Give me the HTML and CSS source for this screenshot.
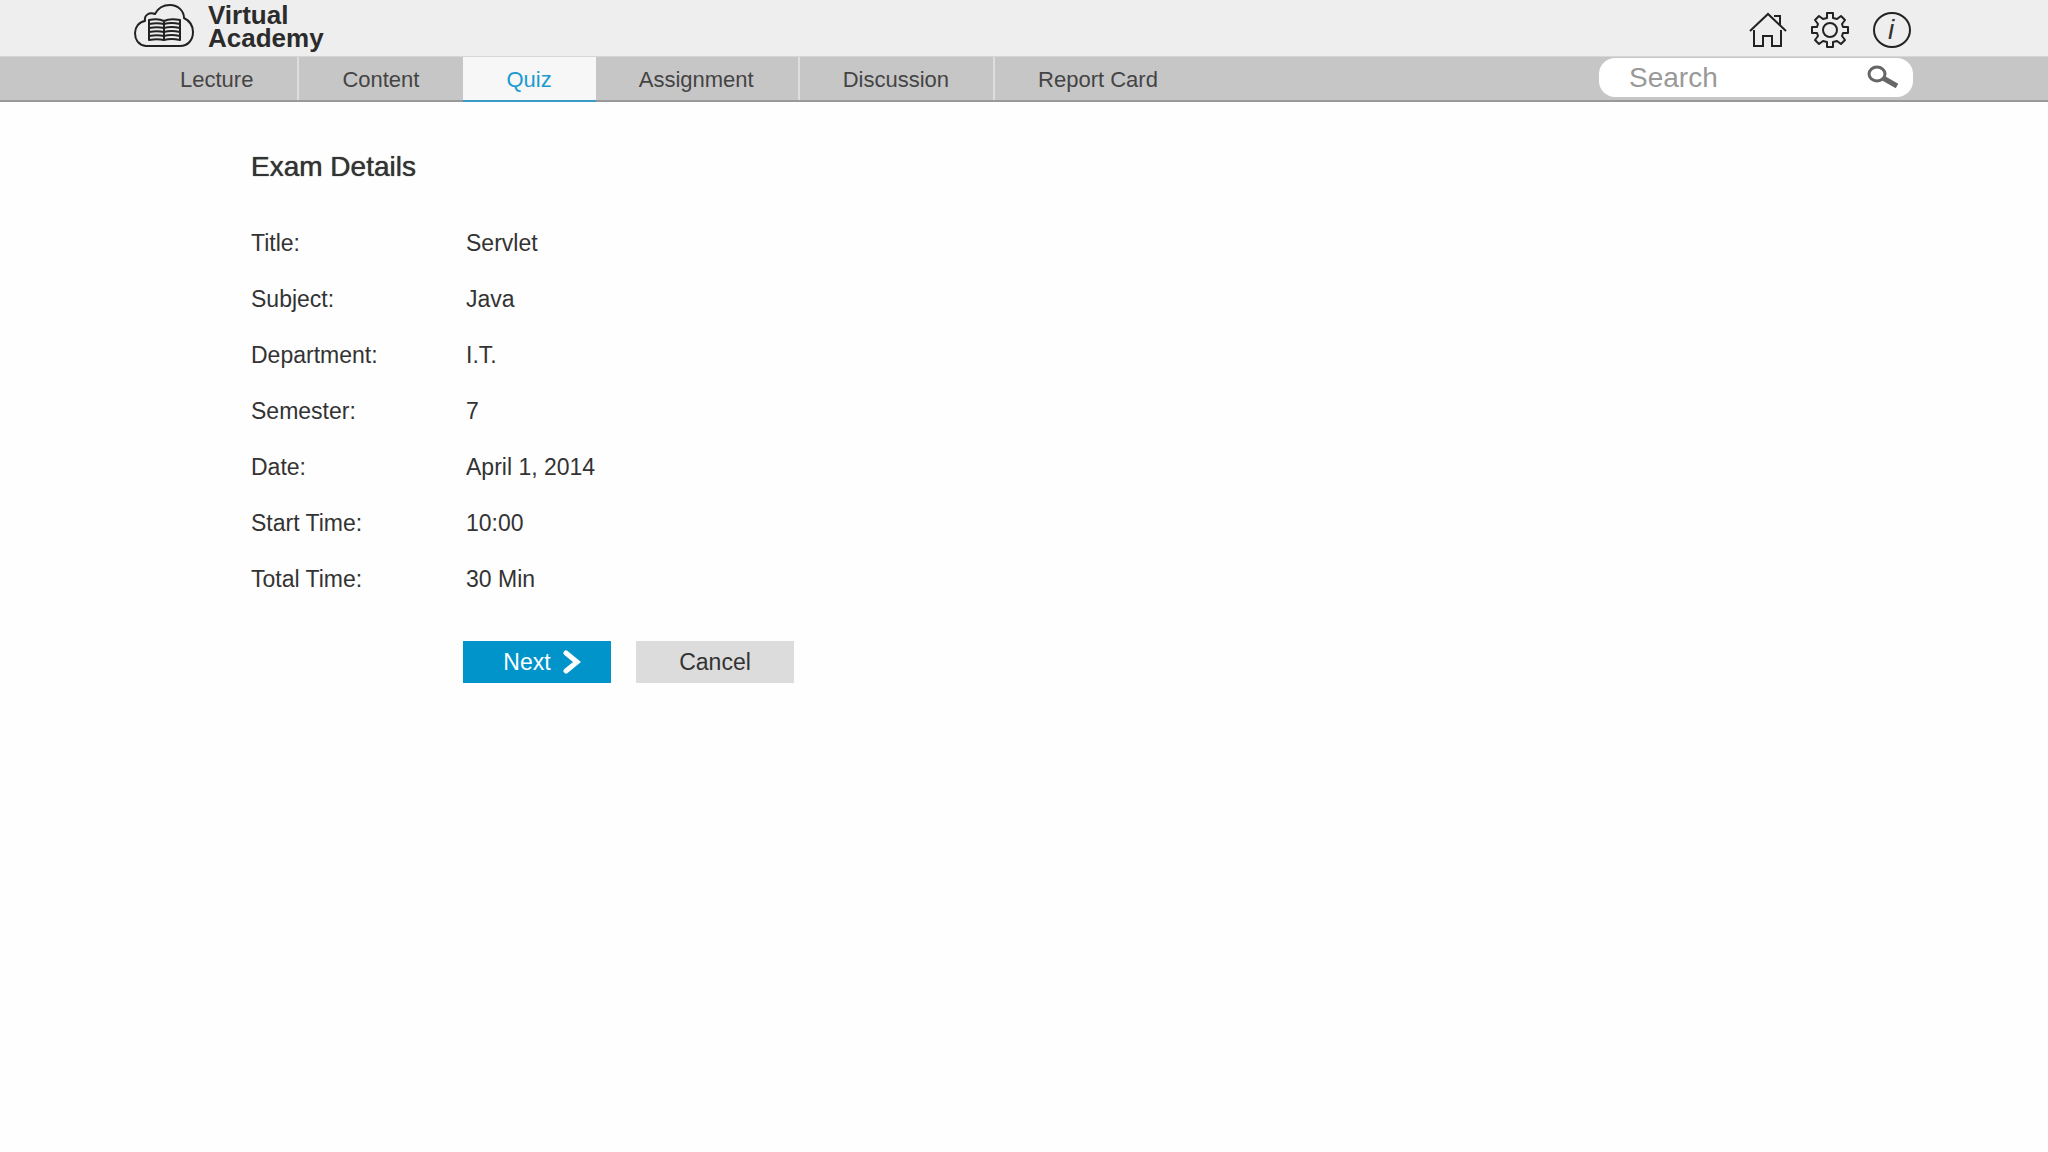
FILE: index.html
```html
<!DOCTYPE html>
<html lang="en">
<head>
    <meta charset="UTF-8">
    <meta name="viewport" content="width=device-width, initial-scale=1.0">
    <title>Virtual Academy - Quiz</title>
    <link rel="stylesheet" href="styles.css">
</head>

<body>

<!-- Header Section -->
<header>
    <a href="#" class="logo">
        <svg width="60" height="44" viewBox="0 0 60 44" fill="none" stroke="#222" stroke-width="2" stroke-linejoin="round">
            <path d="M12 42 C4 41 1 35 1 29 C1 23 5 18 11 17 C10 11 15 8 21 10 C24 4 30 1 36 1 C44 1 50 7 50 14 C56 17 59 22 59 28 C59 36 54 42 46 42 Z"/>
            <path d="M15 16 V36 C20 35 26 35 30 36 C34 35 41 35 46 36 V16 C41 15 34 15 30 17 C26 15 20 15 15 16 Z M30 17 V36"/>
            <path d="M15 20 C20 19 26 19 30 20 C34 19 41 19 46 20 M15 24 C20 23 26 23 30 24 C34 23 41 23 46 24 M15 28 C20 27 26 27 30 28 C34 27 41 27 46 28 M15 32 C20 31 26 31 30 32 C34 31 41 31 46 32"/>
        </svg>
        <span class="logo-text">
            <span>Virtual</span>
            <span>Academy</span>
        </span>
    </a>

    <div class="header-icons">
        <a href="#" aria-label="Home">
            <svg width="38" height="36" viewBox="0 0 38 36" fill="none" stroke="#222" stroke-width="2">
                <path d="M1 19 L19 2 L37 19 M25 4 H31 V13 M5 18 V34 H14 V24 H23 V34 H32 V18"/>
            </svg>
        </a>
        <a href="#" aria-label="Settings">
            <svg width="38" height="36" viewBox="0 0 38 36" fill="none" stroke="#222" stroke-width="2" stroke-linejoin="round">
                <path d="M16 1 H22 V6 L26 7 L30 4 L34 8 L31 12 L32 15 H37 V21 H32 L31 24 L34 28 L30 32 L26 29 L22 30 V35 H16 V30 L12 29 L8 32 L4 28 L7 24 L6 21 H1 V15 H6 L7 12 L4 8 L8 4 L12 7 L16 6 Z"/>
                <circle cx="19" cy="18" r="7"/>
            </svg>
        </a>
        <a href="#" aria-label="Info">
            <svg width="38" height="36" viewBox="0 0 38 36" fill="none">
                <ellipse cx="19" cy="18" rx="18" ry="17" stroke="#222" stroke-width="2"/>
                <text x="18" y="27" text-anchor="middle" class="info-letter">i</text>
            </svg>
        </a>
    </div>
</header>

<!-- Navigation Bar -->
<div class="nav-bar">
    <nav>
        <a href="#">Lecture</a>
        <a href="#" class="divider">Content</a>
        <a href="#" class="active">Quiz</a>
        <a href="#">Assignment</a>
        <a href="#" class="divider">Discussion</a>
        <a href="#" class="divider">Report Card</a>
    </nav>
    <form class="search">
        <input type="search" placeholder="Search" aria-label="Search">
        <button type="submit" aria-label="Submit search">
            <svg width="32" height="24" viewBox="0 0 32 24" fill="none" stroke="#666">
                <ellipse cx="10" cy="9" rx="8" ry="7" stroke-width="3"/>
                <path d="M16 13 L30 21" stroke-width="5"/>
            </svg>
        </button>
    </form>
</div>

<!-- Exam Details -->
<main>
    <h1>Exam Details</h1>
    <dl>
        <dt>Title:</dt>
        <dd>Servlet</dd>
        <dt>Subject:</dt>
        <dd>Java</dd>
        <dt>Department:</dt>
        <dd>I.T.</dd>
        <dt>Semester:</dt>
        <dd>7</dd>
        <dt>Date:</dt>
        <dd>April 1, 2014</dd>
        <dt>Start Time:</dt>
        <dd>10:00</dd>
        <dt>Total Time:</dt>
        <dd>30 Min</dd>
    </dl>
    <div class="buttons">
        <button type="button" class="next-btn">
            Next
            <svg width="18" height="24" viewBox="0 0 18 24" fill="none" stroke="#fff" stroke-width="5" stroke-linecap="round">
                <path d="M3 3 L14 12 L3 21"/>
            </svg>
        </button>
        <button type="button" class="cancel-btn">Cancel</button>
    </div>
</main>

</body>
</html>
```
FILE: styles.css
```css
* {
    box-sizing: border-box;
}

body {
    margin: 0;
    background: #fefefe;
    color: #333;
    font-family: "Liberation Sans", Arial, sans-serif;
    font-size: 22px;
}

/* Header */
header {
    display: flex;
    justify-content: space-between;
    align-items: flex-start;
    height: 56px;
    padding: 4px 137px 0 134px;
    background: #eee;
}

.logo {
    display: flex;
    gap: 14px;
    color: #2b2b2b;
    text-decoration: none;
}

.logo-text {
    display: flex;
    flex-direction: column;
    font-size: 26px;
    font-weight: bold;
    line-height: 23px;
}

.header-icons {
    display: flex;
    gap: 24px;
    padding-top: 8px;
}

svg {
    display: block;
}

.info-letter {
    fill: #333;
    font-size: 28px;
    font-style: italic;
}

/* Navigation */
.nav-bar {
    display: flex;
    justify-content: space-between;
    height: 46px;
    padding: 0 135px 0 137px;
    background: #c6c6c6;
    border-top: 1px solid #d6d6d6;
    border-bottom: 2px solid #999;
}

nav {
    display: flex;
}

nav a {
    height: 43px;
    padding: 0 44px 0 43px;
    color: #444;
    line-height: 45px;
    text-decoration: none;
}

nav a.divider {
    border-left: 2px solid #dedede;
}

nav a.active {
    height: 45px;
    background: #f7f7f7;
    border-bottom: 2px solid #3a9cc4;
    color: #1c9ad0;
}

/* Search Box */
.search {
    display: flex;
    align-items: center;
    width: 314px;
    height: 39px;
    margin-top: 1px;
    padding: 0 14px 2px 30px;
    background: #fff;
    border-radius: 16px;
}

.search input {
    flex: 1;
    min-width: 0;
    padding: 2px 0 0;
    border: none;
    outline: none;
    background: none;
    color: #555;
    font-family: inherit;
    font-size: 28px;
}

.search input::placeholder {
    color: #999;
}

.search button {
    padding: 0;
    border: none;
    background: none;
    cursor: pointer;
}

/* Exam Details */
main {
    padding: 49px 251px;
}

h1 {
    margin: 0 0 32px;
    font-size: 28px;
    font-weight: normal;
    line-height: 32px;
    text-shadow: 0 0 1px #333;
}

dl {
    display: grid;
    grid-template-columns: 215px 1fr;
    margin: 0;
    font-size: 23px;
    line-height: 56px;
}

dd {
    margin: 0;
}

.buttons {
    display: flex;
    gap: 25px;
    margin: 34px 0 0 212px;
}

.buttons button {
    display: flex;
    justify-content: center;
    align-items: center;
    gap: 12px;
    height: 42px;
    padding: 0;
    border: none;
    font-family: inherit;
    font-size: 23px;
    cursor: pointer;
}

.buttons .next-btn {
    width: 148px;
    padding-left: 10px;
    background: #0094cb;
    color: #fff;
}

.buttons .cancel-btn {
    width: 158px;
    background: #dcdcdc;
    color: #333;
}
```
